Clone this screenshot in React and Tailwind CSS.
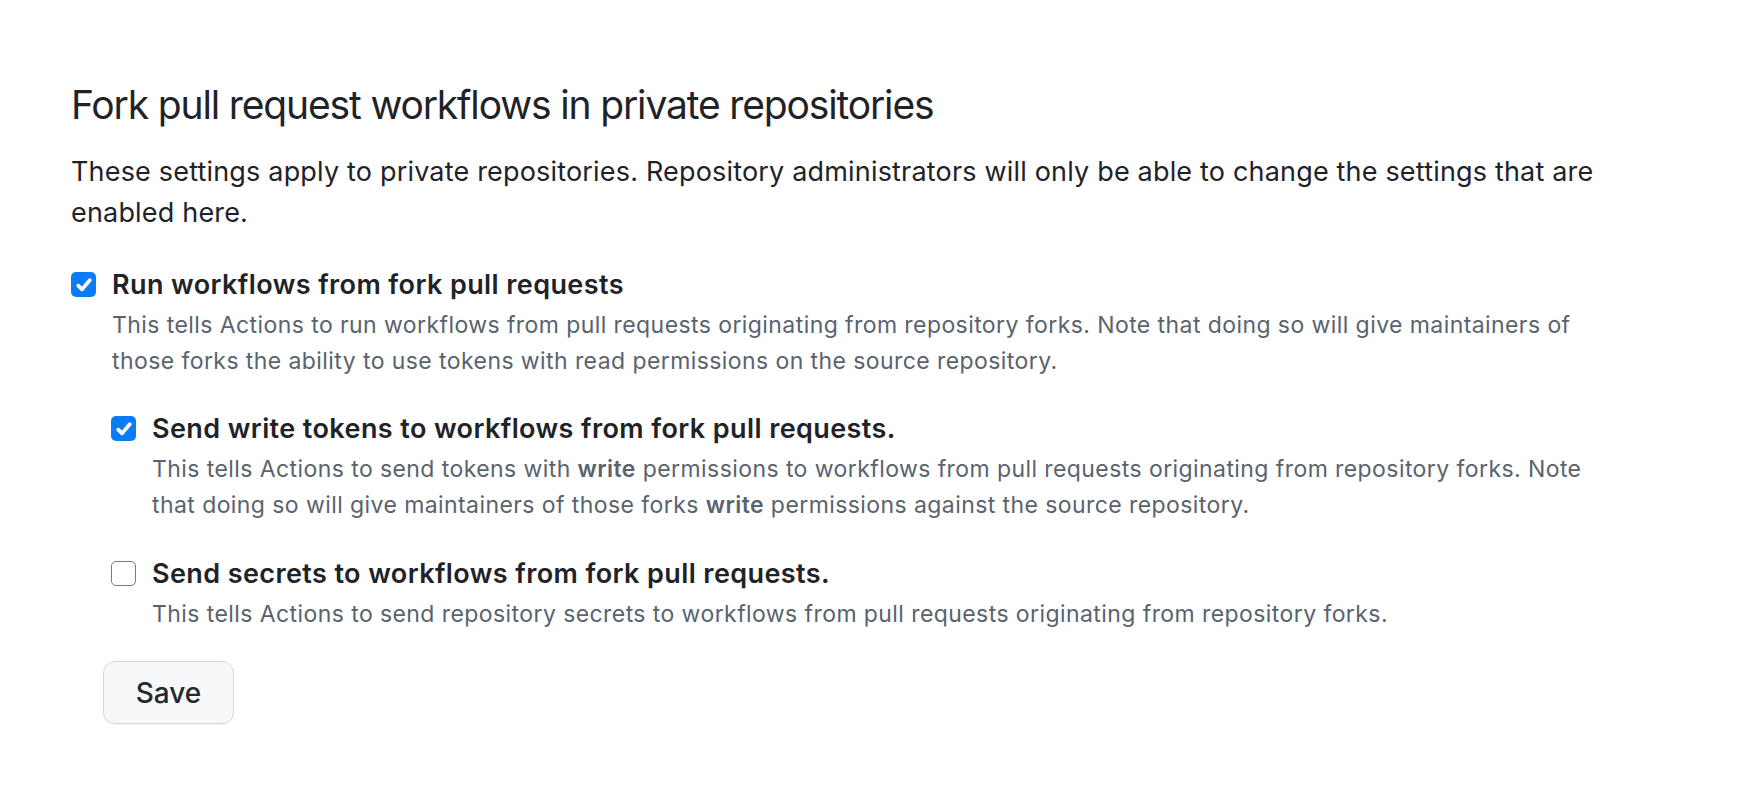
import { useState } from 'react'

function Checkbox({ checked, onChange }) {
  return (
    <button
      type="button"
      onClick={onChange}
      className={`mt-[7px] flex h-[25px] w-[25px] shrink-0 items-center justify-center rounded-[5px] ${
        checked ? 'bg-[#0b7cf5]' : 'border-[1.5px] border-[#7a7a7a] bg-white'
      }`}
    >
      {checked && (
        <svg viewBox="0 0 16 16" className="h-[20px] w-[20px]" fill="none">
          <path d="M3.4 8.5 6.4 11.5 12.6 4.2" stroke="white" strokeWidth="3" strokeLinecap="round" strokeLinejoin="round" />
        </svg>
      )}
    </button>
  )
}

function Option({ checked, onChange, label, children, className = '' }) {
  return (
    <div className={`flex gap-[16px] ${className}`}>
      <Checkbox checked={checked} onChange={onChange} />
      <div>
        <div className="text-[27px] font-semibold leading-[40px] tracking-[0.4px] text-[#1f2328]">{label}</div>
        <p className="mt-[2px] text-[23px] leading-[36px] tracking-[0.42px] text-[#59636e]">{children}</p>
      </div>
    </div>
  )
}

export default function App() {
  const [runForks, setRunForks] = useState(true)
  const [writeTokens, setWriteTokens] = useState(true)
  const [sendSecrets, setSendSecrets] = useState(false)

  return (
    <div className="min-h-[812px] bg-white font-['Inter',sans-serif] antialiased">
      <div className="w-[1610px] pl-[71px] pt-[80px]">
        <h2 className="text-[39px] font-normal leading-[50px] tracking-[-1.15px] text-[#1f2328]">
          Fork pull request workflows in private repositories
        </h2>
        <p className="mt-[21px] text-[27px] leading-[41px] tracking-[0.18px] text-[#1f2328]">
          These settings apply to private repositories. Repository administrators will only be able to change the settings that are enabled here.
        </p>

        <Option
          className="mt-[32px]"
          checked={runForks}
          onChange={() => setRunForks(!runForks)}
          label="Run workflows from fork pull requests"
        >
          This tells Actions to run workflows from pull requests originating from repository forks. Note that doing so will give maintainers of those forks the ability to use tokens with read permissions on the source repository.
        </Option>

        <div className="pl-[40px]">
          <Option
            className="mt-[30px]"
            checked={writeTokens}
            onChange={() => setWriteTokens(!writeTokens)}
            label="Send write tokens to workflows from fork pull requests."
          >
            This tells Actions to send tokens with <span className="font-semibold">write</span> permissions to workflows from pull requests originating from repository forks. Note that doing so will give maintainers of those forks <span className="font-semibold">write</span> permissions against the source repository.
          </Option>

          <Option
            className="mt-[31px]"
            checked={sendSecrets}
            onChange={() => setSendSecrets(!sendSecrets)}
            label="Send secrets to workflows from fork pull requests."
          >
            This tells Actions to send repository secrets to workflows from pull requests originating from repository forks.
          </Option>
        </div>

        <button
          type="button"
          className="ml-[32px] mt-[29px] h-[63px] w-[131px] rounded-[12px] border border-[#d1d9e0] bg-[#f6f8fa] text-[28px] font-medium text-[#25292e] shadow-[0_1px_0_rgba(31,35,40,0.04)]"
        >
          Save
        </button>
      </div>
    </div>
  )
}
